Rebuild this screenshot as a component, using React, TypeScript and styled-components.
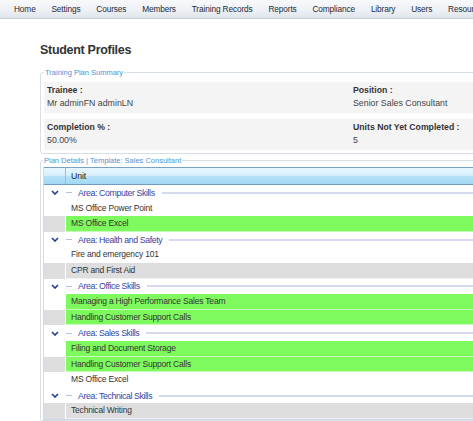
import React from "react";
import styled, { createGlobalStyle } from "styled-components";

const GlobalStyle = createGlobalStyle`
  html, body {
    margin: 0;
    padding: 0;
    background: #fff;
    overflow: hidden;
  }
  body {
    font-family: "Liberation Sans", Arial, sans-serif;
  }
`;

const NavBar = styled.nav`
  display: flex;
  align-items: center;
  gap: 15.8px;
  height: 18px;
  padding-left: 14px;
  background: linear-gradient(#f8f9fb 0%, #eef1f5 55%, #dfe5ec 100%);
  border-bottom: 1px solid #c8d0da;
  overflow: hidden;
`;

const NavItem = styled.span`
  flex-shrink: 0;
  font-size: 8.3px;
  letter-spacing: -0.12px;
  line-height: 18px;
  color: #1e2a3a;
  white-space: nowrap;
`;

const Main = styled.main`
  width: 520px;
  padding-left: 40px;
`;

const Title = styled.h1`
  margin: 24px 0 0;
  font-size: 12.5px;
  line-height: 14px;
  font-weight: bold;
  letter-spacing: -0.3px;
  color: #333;
`;

const Fieldset = styled.fieldset<{ $mt: number; $pad: string }>`
  margin: ${(p) => p.$mt}px 0 0;
  padding: ${(p) => p.$pad};
  border: 1px solid #d8dee6;
  border-radius: 3px;
  min-width: 0;
`;

const Legend = styled.legend`
  padding: 0 1px;
  font-size: 7.5px;
  line-height: 9px;
  color: #4f94d4;
`;

const SummaryRow = styled.div`
  display: grid;
  grid-template-columns: 306px 1fr;
  padding: 2px 0 3px 3px;
  background: #f4f4f4;
  & + & {
    margin-top: 6px;
  }
`;

const Label = styled.div`
  font-size: 8.7px;
  line-height: 13px;
  font-weight: bold;
  color: #333;
`;

const Value = styled.div`
  font-size: 8.8px;
  line-height: 13px;
  color: #444;
`;

const Table = styled.div`
  border-left: 1px solid #d5dbe2;
  border-bottom: 1px solid #c9d7e6;
`;

const HeaderRow = styled.div`
  display: flex;
  height: 16.5px;
  border-top: 1px solid #7aa3c3;
  border-bottom: 1px solid #6f9cbf;
  background: linear-gradient(#e8f6fd 0%, #d9f0fc 45%, #b6e1f8 52%, #a3d8f4 100%);
`;

const HeaderLead = styled.div`
  width: 21px;
  border-right: 1px solid #94bfdc;
`;

const HeaderCell = styled.div`
  padding-left: 5px;
  font-size: 8.7px;
  letter-spacing: -0.1px;
  line-height: 16.5px;
  color: #222;
`;

const GroupRow = styled.div`
  display: flex;
  align-items: center;
  height: 15.6px;
`;

const Toggle = styled.div`
  width: 22px;
  display: flex;
  justify-content: center;
  align-items: center;
`;

const Dash = styled.span`
  width: 6px;
  height: 1px;
  margin-right: 6px;
  background: #b9bfe0;
`;

const GroupTitle = styled.span`
  font-size: 8.8px;
  letter-spacing: -0.4px;
  color: #3445a6;
  white-space: nowrap;
`;

const GroupLine = styled.span`
  flex: 1;
  height: 2px;
  margin-left: 7px;
  background: #d6d9ef;
`;

const DataRow = styled.div`
  display: flex;
  height: 15.6px;
`;

const Lead = styled.div<{ $alt: boolean }>`
  width: 21px;
  border-right: 1px solid #fff;
  background: ${(p) => (p.$alt ? "#dedede" : "#fff")};
`;

const UnitCell = styled.div<{ $alt: boolean; $done: boolean }>`
  flex: 1;
  padding-left: 5px;
  font-size: 8.5px;
  letter-spacing: -0.2px;
  line-height: 15.6px;
  color: #333;
  white-space: nowrap;
  background: ${(p) => (p.$done ? "#7ffa5e" : p.$alt ? "#dedede" : "#fff")};
  box-shadow: inset 0 -1px 0 rgba(255, 255, 255, 0.55);
`;

const Chevron = () => (
  <svg width="8" height="5" viewBox="0 0 8 5" aria-hidden="true">
    <path d="M1 1 L4 4 L7 1" fill="none" stroke="#1f3a93" strokeWidth="1.6" />
  </svg>
);

type Unit = { name: string; done?: boolean };
type Group = { area: string; units: Unit[] };

const groups: Group[] = [
  {
    area: "Computer Skills",
    units: [{ name: "MS Office Power Point" }, { name: "MS Office Excel", done: true }],
  },
  {
    area: "Health and Safety",
    units: [{ name: "Fire and emergency 101" }, { name: "CPR and First Aid" }],
  },
  {
    area: "Office Skills",
    units: [
      { name: "Managing a High Performance Sales Team", done: true },
      { name: "Handling Customer Support Calls", done: true },
    ],
  },
  {
    area: "Sales Skills",
    units: [
      { name: "Filing and Document Storage", done: true },
      { name: "Handling Customer Support Calls", done: true },
      { name: "MS Office Excel" },
    ],
  },
  {
    area: "Technical Skills",
    units: [{ name: "Technical Writing" }],
  },
];

const navItems = [
  "Home",
  "Settings",
  "Courses",
  "Members",
  "Training Records",
  "Reports",
  "Compliance",
  "Library",
  "Users",
  "Resources",
];

export default function App() {
  let idx = 0;
  return (
    <>
      <GlobalStyle />
      <NavBar>
        {navItems.map((n) => (
          <NavItem key={n}>{n}</NavItem>
        ))}
      </NavBar>
      <Main>
        <Title>Student Profiles</Title>
        <Fieldset $mt={11} $pad="5px 0 2.5px 3px">
          <Legend>Training Plan Summary</Legend>
          <SummaryRow>
            <div>
              <Label>Trainee :</Label>
              <Value>Mr adminFN adminLN</Value>
            </div>
            <div>
              <Label>Position :</Label>
              <Value>Senior Sales Consultant</Value>
            </div>
          </SummaryRow>
          <SummaryRow>
            <div>
              <Label>Completion % :</Label>
              <Value>50.00%</Value>
            </div>
            <div>
              <Label>Units Not Yet Completed :</Label>
              <Value>5</Value>
            </div>
          </SummaryRow>
        </Fieldset>
        <Fieldset $mt={2} $pad="2px 0 0 2px">
          <Legend>Plan Details | Template: Sales Consultant</Legend>
          <Table>
            <HeaderRow>
              <HeaderLead />
              <HeaderCell>Unit</HeaderCell>
            </HeaderRow>
            {groups.map((g) => (
              <React.Fragment key={g.area}>
                <GroupRow>
                  <Toggle>
                    <Chevron />
                  </Toggle>
                  <Dash />
                  <GroupTitle>Area: {g.area}</GroupTitle>
                  <GroupLine />
                </GroupRow>
                {g.units.map((u) => {
                  const alt = idx % 2 === 1;
                  idx += 1;
                  return (
                    <DataRow key={`${g.area}-${u.name}`}>
                      <Lead $alt={alt} />
                      <UnitCell $alt={alt} $done={!!u.done}>
                        {u.name}
                      </UnitCell>
                    </DataRow>
                  );
                })}
              </React.Fragment>
            ))}
          </Table>
        </Fieldset>
      </Main>
    </>
  );
}
